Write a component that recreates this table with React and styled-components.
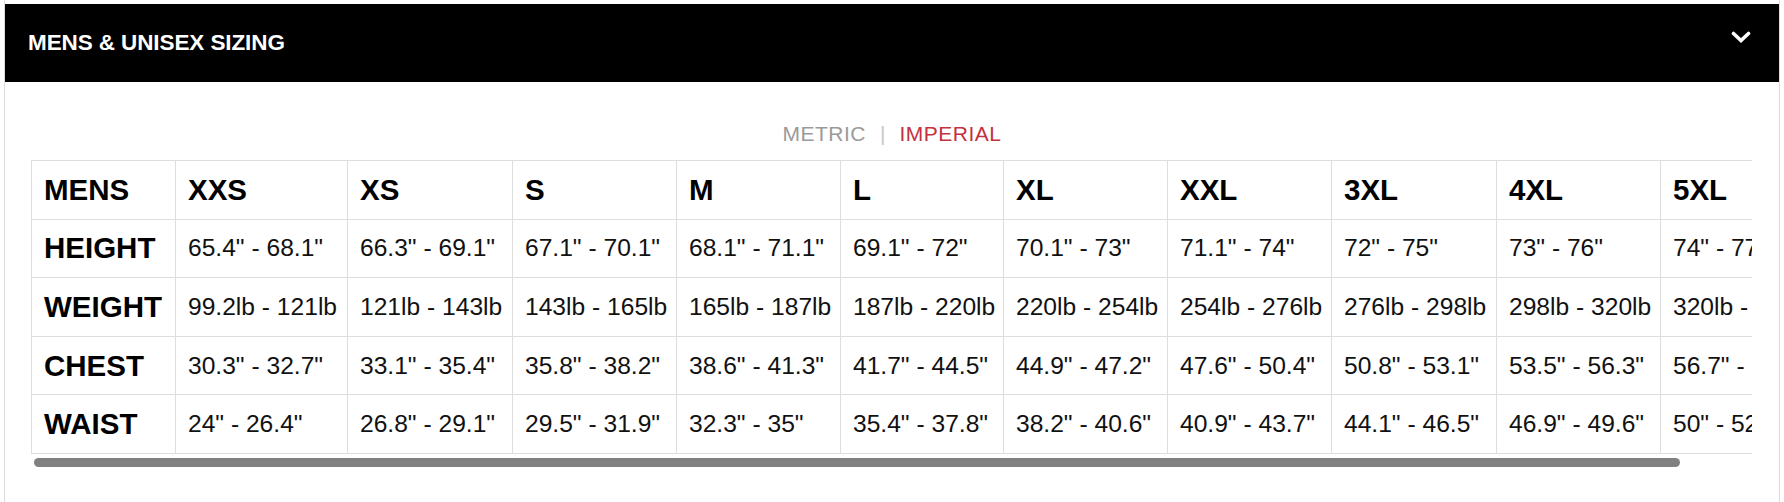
import React from "react";
import styled, { createGlobalStyle } from "styled-components";

const GlobalStyle = createGlobalStyle`
  html, body {
    margin: 0;
    padding: 0;
    background: #fff;
    font-family: "Liberation Sans", Arial, Helvetica, sans-serif;
  }
`;

const SIZES = ["XXS", "XS", "S", "M", "L", "XL", "XXL", "3XL", "4XL", "5XL"];
const COL_WIDTHS = [144, 172, 165, 164, 164, 163, 164, 164, 165, 164, 165];

const ROWS = [
  {
    label: "HEIGHT",
    values: [
      '65.4" - 68.1"',
      '66.3" - 69.1"',
      '67.1" - 70.1"',
      '68.1" - 71.1"',
      '69.1" - 72"',
      '70.1" - 73"',
      '71.1" - 74"',
      '72" - 75"',
      '73" - 76"',
      '74" - 77"',
    ],
  },
  {
    label: "WEIGHT",
    values: [
      "99.2lb - 121lb",
      "121lb - 143lb",
      "143lb - 165lb",
      "165lb - 187lb",
      "187lb - 220lb",
      "220lb - 254lb",
      "254lb - 276lb",
      "276lb - 298lb",
      "298lb - 320lb",
      "320lb - 342lb",
    ],
  },
  {
    label: "CHEST",
    values: [
      '30.3" - 32.7"',
      '33.1" - 35.4"',
      '35.8" - 38.2"',
      '38.6" - 41.3"',
      '41.7" - 44.5"',
      '44.9" - 47.2"',
      '47.6" - 50.4"',
      '50.8" - 53.1"',
      '53.5" - 56.3"',
      '56.7" - 59.1"',
    ],
  },
  {
    label: "WAIST",
    values: [
      '24" - 26.4"',
      '26.8" - 29.1"',
      '29.5" - 31.9"',
      '32.3" - 35"',
      '35.4" - 37.8"',
      '38.2" - 40.6"',
      '40.9" - 43.7"',
      '44.1" - 46.5"',
      '46.9" - 49.6"',
      '50" - 52.4"',
    ],
  },
];

const Page = styled.div`
  padding: 0 4px;
`;

const Panel = styled.section`
  border-left: 1px solid #dcdcdc;
  border-right: 1px solid #dcdcdc;
  padding-top: 4px;
  min-height: 498px;
`;

const Header = styled.header`
  display: flex;
  align-items: center;
  justify-content: space-between;
  height: 78px;
  padding: 0 28px 0 23px;
  background: #000;
`;

const Title = styled.h2`
  margin: 0;
  color: #fff;
  font-size: 22.5px;
  font-weight: 700;
  letter-spacing: -0.1px;
  text-transform: uppercase;
`;

const Toggle = styled.button`
  display: flex;
  margin-bottom: 12px;
  padding: 0;
  border: 0;
  background: none;
  cursor: pointer;
`;

const UnitSwitch = styled.div`
  display: flex;
  justify-content: center;
  align-items: center;
  margin-top: 40px;
  font-size: 21px;
  line-height: 24px;
  letter-spacing: 0.5px;
`;

const Unit = styled.span`
  color: ${(p) => (p.$active ? "#c4313f" : "#9a9a9a")};
  cursor: pointer;
`;

const Divider = styled.span`
  margin: 0 14px;
  color: #c8c8c8;
  letter-spacing: 0;
`;

const TableArea = styled.div`
  margin: 14px 27px 0 26px;
`;

const TableClip = styled.div`
  overflow: hidden;
`;

const Table = styled.table`
  width: ${(p) => p.$width}px;
  table-layout: fixed;
  border-collapse: collapse;

  tr {
    height: 58.6px;
  }

  th,
  td {
    padding: 0 10px 0 12px;
    border: 1px solid #dedede;
    text-align: left;
    vertical-align: middle;
    white-space: nowrap;
    overflow: hidden;
  }

  th {
    color: #000;
    font-size: 29.5px;
    font-weight: 700;
    letter-spacing: 0;
  }

  td {
    color: #111;
    font-size: 24.6px;
    letter-spacing: 0;
  }
`;

const ScrollTrack = styled.div`
  margin-top: 4px;
  padding-left: 3px;
`;

const ScrollThumb = styled.div`
  width: ${(p) => p.$ratio * 100}%;
  height: 9px;
  border-radius: 5px;
  background: #808080;
`;

const Chevron = () => (
  <svg width="20" height="12" viewBox="0 0 20 12" aria-hidden="true">
    <polyline
      points="2.5,2.5 10,9.5 17.5,2.5"
      fill="none"
      stroke="#fff"
      strokeWidth="3.6"
      strokeLinecap="round"
      strokeLinejoin="miter"
    />
  </svg>
);

export default function App() {
  const tableWidth = COL_WIDTHS.reduce((a, b) => a + b, 0);
  const visible = 1721;

  return (
    <Page>
      <GlobalStyle />
      <Panel>
        <Header>
          <Title>Mens &amp; Unisex Sizing</Title>
          <Toggle aria-label="Collapse">
            <Chevron />
          </Toggle>
        </Header>

        <UnitSwitch>
          <Unit>METRIC</Unit>
          <Divider>|</Divider>
          <Unit $active>IMPERIAL</Unit>
        </UnitSwitch>

        <TableArea>
          <TableClip>
            <Table $width={tableWidth}>
              <colgroup>
                {COL_WIDTHS.map((w, i) => (
                  <col key={i} style={{ width: w }} />
                ))}
              </colgroup>
              <thead>
                <tr>
                  <th>MENS</th>
                  {SIZES.map((s) => (
                    <th key={s}>{s}</th>
                  ))}
                </tr>
              </thead>
              <tbody>
                {ROWS.map((row) => (
                  <tr key={row.label}>
                    <th>{row.label}</th>
                    {row.values.map((v, i) => (
                      <td key={i}>{v}</td>
                    ))}
                  </tr>
                ))}
              </tbody>
            </Table>
          </TableClip>
          <ScrollTrack>
            <ScrollThumb $ratio={1649 / visible} />
          </ScrollTrack>
        </TableArea>
      </Panel>
    </Page>
  );
}
